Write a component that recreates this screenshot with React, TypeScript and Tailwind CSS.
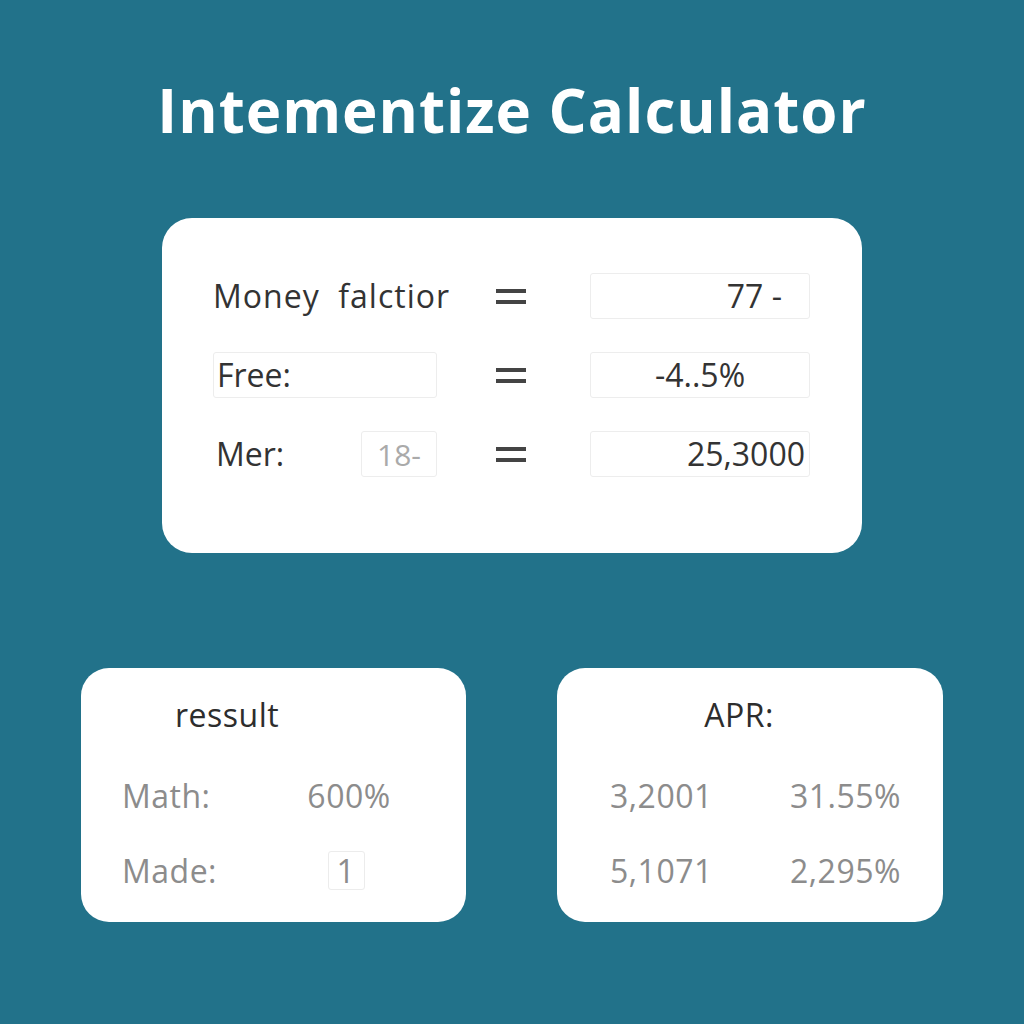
import React from "react";

const font = { fontFamily: '"Open Sans", "Noto Sans", sans-serif' };

function Equals() {
  return (
    <div className="flex flex-col gap-[7px] items-center justify-center">
      <div className="w-[30px] h-[4px] bg-[#444]" />
      <div className="w-[30px] h-[4px] bg-[#444]" />
    </div>
  );
}

function Box({ children, className = "" }: { children?: React.ReactNode; className?: string }) {
  return (
    <div className={"border border-[#ededed] rounded-[3px] h-[46px] flex items-center " + className}>
      {children}
    </div>
  );
}

export default function App() {
  return (
    <div className="w-[1024px] h-[1024px] bg-[#22728a] flex flex-col items-center" style={font}>
      <h1 className="mt-[80px] text-white font-bold text-[60px] leading-none tracking-[1px]">
        Intementize Calculator
      </h1>

      {/* inputs */}
      <div className="mt-[78px] w-[700px] h-[335px] bg-white rounded-[30px] pl-[51px] pr-[52px] pt-[55px]">
        <div className="grid grid-cols-[224px_1fr_220px] gap-y-[33px] text-[#333] text-[32px]">
          <div className="h-[46px] flex items-center whitespace-nowrap tracking-[1px]">Money&nbsp;&nbsp;falctior</div>
          <div className="flex items-center justify-center pr-[6px]"><Equals /></div>
          <Box className="justify-end pr-[27px]">77 -</Box>

          <Box className="pl-[3px]">Free:</Box>
          <div className="flex items-center justify-center pr-[6px]"><Equals /></div>
          <Box className="justify-center">-4..5%</Box>

          <div className="h-[46px] flex items-center justify-between">
            <span className="pl-[3px]">Mer:</span>
            <Box className="w-[76px] justify-center text-[#aaa] text-[30px]">18-</Box>
          </div>
          <div className="flex items-center justify-center pr-[6px]"><Equals /></div>
          <Box className="justify-end pr-[4px]">25,3000</Box>
        </div>
      </div>

      <div className="mt-[115px] flex gap-[91px]">
        {/* result */}
        <div className="w-[385px] h-[254px] bg-white rounded-[28px] pt-[29px] text-[32px] tracking-[0.5px]">
          <div className="pl-[94px] text-[#2d2d2d] leading-[36px]">ressult</div>
          <div className="mt-[40px] grid grid-cols-[174px_100px] pl-[41px] text-[#8c8c8c] gap-y-[30px]">
            <div className="h-[45px] flex items-center">Math:</div>
            <div className="h-[45px] flex items-center justify-center pl-[6px]">600%</div>
            <div className="h-[45px] flex items-center">Made:</div>
            <div className="h-[45px] flex items-center justify-center">
              <div className="w-[37px] h-[39px] border border-[#ececec] rounded-[3px] flex items-center justify-center">1</div>
            </div>
          </div>
        </div>

        {/* APR */}
        <div className="w-[386px] h-[254px] bg-white rounded-[28px] pt-[29px] text-[32px] tracking-[0.5px]">
          <div className="text-center pr-[22px] text-[#2d2d2d] leading-[36px]">APR:</div>
          <div className="mt-[40px] grid grid-cols-[180px_120px] pl-[53px] text-[#8c8c8c] gap-y-[30px]">
            <div className="h-[45px] flex items-center">3,2001</div>
            <div className="h-[45px] flex items-center">31.55%</div>
            <div className="h-[45px] flex items-center">5,1071</div>
            <div className="h-[45px] flex items-center">2,295%</div>
          </div>
        </div>
      </div>
    </div>
  );
}
